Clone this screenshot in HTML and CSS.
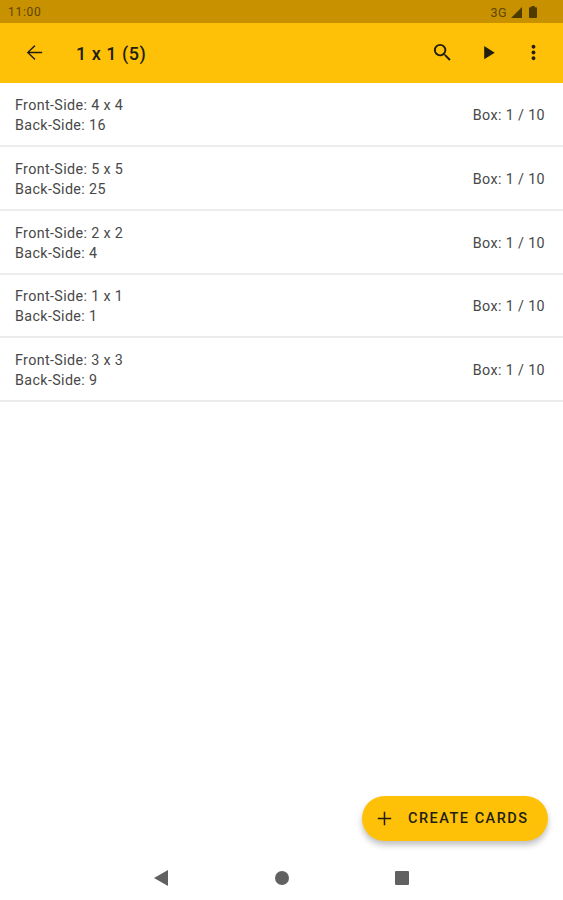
FILE: index.html
```html
<!DOCTYPE html>
<html lang="en">
<head>
    <meta charset="UTF-8">
    <meta name="viewport" content="width=device-width, initial-scale=1.0">
    <title>1 x 1 (5)</title>
    <link rel="stylesheet" href="styles.css">
</head>
<body>

    <div class="status-bar">
        <span class="time">11:00</span>
        <span class="network">3G</span>
        <svg class="signal" width="11" height="11" viewBox="0 0 11 11"><path d="M11 0v11H0z"/></svg>
        <svg class="battery" width="8" height="12" viewBox="0 0 8 12"><path d="M2.4 0h3.2v1.2H7q1 0 1 1V11q0 1-1 1H1q-1 0-1-1V2.2q0-1 1-1h1.4z"/></svg>
    </div>

    <header class="app-bar">
        <svg class="icon back" viewBox="0 0 24 24"><path d="M20 11.3H6.8l6.1-5.9L12 4.2l-8 7.8 8 7.8.9-1.2-6.1-5.9H20v-1.4z"/></svg>
        <h1 class="title">1 x 1 (5)</h1>
        <svg class="icon" viewBox="0 0 24 24"><path d="M15.5 14h-.79l-.28-.27A6.471 6.471 0 0 0 16 9.5 6.5 6.5 0 1 0 9.5 16c1.61 0 3.09-.59 4.23-1.57l.27.28v.79l5 4.99L20.49 19l-4.99-5zm-6 0C7.01 14 5 11.99 5 9.5S7.01 5 9.5 5 14 7.01 14 9.5 11.99 14 9.5 14z"/></svg>
        <svg class="icon" viewBox="0 0 24 24"><path d="M7.5 5.3v13.8l11-6.9z"/></svg>
        <svg class="icon" viewBox="0 0 24 24"><path d="M12 8c1.1 0 2-.9 2-2s-.9-2-2-2-2 .9-2 2 .9 2 2 2zm0 2c-1.1 0-2 .9-2 2s.9 2 2 2 2-.9 2-2-.9-2-2-2zm0 6c-1.1 0-2 .9-2 2s.9 2 2 2 2-.9 2-2-.9-2-2-2z"/></svg>
    </header>

    <main class="cards">
        <div class="card">
            <div class="sides">Front-Side: 4 x 4<br>Back-Side: 16</div>
            <div class="box">Box: 1 / 10</div>
        </div>
        <div class="card">
            <div class="sides">Front-Side: 5 x 5<br>Back-Side: 25</div>
            <div class="box">Box: 1 / 10</div>
        </div>
        <div class="card">
            <div class="sides">Front-Side: 2 x 2<br>Back-Side: 4</div>
            <div class="box">Box: 1 / 10</div>
        </div>
        <div class="card">
            <div class="sides">Front-Side: 1 x 1<br>Back-Side: 1</div>
            <div class="box">Box: 1 / 10</div>
        </div>
        <div class="card">
            <div class="sides">Front-Side: 3 x 3<br>Back-Side: 9</div>
            <div class="box">Box: 1 / 10</div>
        </div>
    </main>

    <button class="create">
        <svg class="plus" viewBox="0 0 24 24"><path d="M19 12.8h-6.2V19h-1.6v-6.2H5v-1.6h6.2V5h1.6v6.2H19z"/></svg>
        <span>CREATE CARDS</span>
    </button>

    <nav class="nav-bar">
        <svg width="14" height="16" viewBox="0 0 14 16"><path d="M14 0v16L0 8z"/></svg>
        <svg width="14" height="14" viewBox="0 0 14 14"><circle cx="7" cy="7" r="7"/></svg>
        <svg width="14" height="14" viewBox="0 0 14 14"><rect width="14" height="14" rx="1"/></svg>
    </nav>

</body>
</html>
```
FILE: styles.css
```css
* {
    box-sizing: border-box;
}

body {
    display: flex;
    flex-direction: column;
    height: 100vh;
    margin: 0;
    background-color: #fff;
    font-family: Roboto, sans-serif;
    overflow: hidden;
}

svg {
    display: block;
    flex: none;
}

.status-bar {
    display: flex;
    align-items: center;
    height: 23px;
    padding: 1px 26px 0 8px;
    background-color: #c79100;
    color: #5e4500;
    fill: #4f3a00;
    font-size: 12px;
}

.time {
    flex: 1;
    letter-spacing: 0.7px;
}

.network {
    font-size: 12.5px;
    letter-spacing: 0.5px;
}

.signal {
    margin-left: 4px;
}

.battery {
    margin-left: 7px;
}

.app-bar {
    display: flex;
    align-items: center;
    height: 59.5px;
    padding: 0 18px 0 23px;
    background-color: #ffc107;
}

.icon {
    width: 23px;
    height: 23px;
    margin-left: 22.3px;
    fill: #221e10;
}

.icon.back {
    margin-left: 0;
}

.title {
    flex: 1;
    margin: 2px 0 0 30px;
    color: #221e10;
    font-size: 18px;
    font-weight: 500;
    letter-spacing: 0.5px;
}

.cards {
    flex: 1;
    padding-top: 1px;
}

.card {
    display: flex;
    align-items: center;
    justify-content: space-between;
    height: 63.7px;
    padding: 2px 18px 0 15px;
    border-bottom: 2px solid #ececec;
    color: #484848;
    font-size: 14.3px;
    line-height: 20px;
    letter-spacing: 0.37px;
}

.create {
    display: flex;
    align-items: center;
    align-self: flex-end;
    width: 186px;
    height: 45px;
    margin: 0 15px 15px 0;
    padding: 0 0 0 11px;
    border: none;
    border-radius: 23px;
    background-color: #ffc107;
    box-shadow: 0 4px 6px rgba(0, 0, 0, 0.25);
    color: #221e10;
    font-family: inherit;
    font-size: 14.5px;
    font-weight: 500;
    letter-spacing: 1.5px;
}

.plus {
    width: 23px;
    height: 23px;
    margin-right: 12px;
    fill: #221e10;
}

.nav-bar {
    display: flex;
    align-items: center;
    justify-content: space-between;
    height: 44px;
    margin: 0 154px;
    fill: #616161;
}
```
